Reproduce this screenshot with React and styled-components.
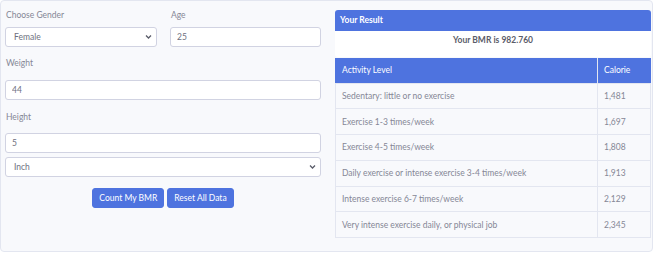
import React from "react";
import styled, { createGlobalStyle } from "styled-components";

const Global = createGlobalStyle`
  html, body { margin: 0; padding: 0; background: #ffffff; }
  body { font-family: Lato, "Noto Sans", sans-serif; }
  * { box-sizing: border-box; }
`;

const Card = styled.div`
  width: 653px;
  height: 252px;
  background: #f8f9fc;
  border: 1px solid #e3e6f0;
  border-radius: 4px;
  display: grid;
  grid-template-columns: 317px 317px;
  column-gap: 13px;
  align-items: start;
  padding: 0 0 0 4px;
`;

const FormCol = styled.div`
  display: flex;
  flex-direction: column;
  padding-top: 8px;
`;

const Row = styled.div`
  display: grid;
  grid-template-columns: 152px 151px;
  column-gap: 13px;
  width: 316px;
`;

const Group = styled.div`
  display: flex;
  flex-direction: column;
  margin-bottom: ${(p) => p.$mb || 0}px;
`;

const Label = styled.label`
  display: block;
  font-size: 8.5px;
  line-height: 12px;
  height: 12px;
  color: #858796;
  padding-left: 1px;
  margin-bottom: ${(p) => p.$mb || 6}px;
`;

const Input = styled.input`
  display: block;
  width: ${(p) => p.$w || "100%"};
  height: 20px;
  border: 1px solid #d1d3e2;
  border-radius: 3px;
  background: #fff;
  font-family: inherit;
  font-size: 8.5px;
  color: #6e707e;
  padding: 0 6px;
  outline: none;
  margin: 0 0 ${(p) => p.$mb || 0}px 0;
`;

const SelectWrap = styled.div`
  position: relative;
  width: ${(p) => p.$w || "100%"};
  height: 20px;
`;

const Select = styled.select`
  display: block;
  appearance: none;
  -webkit-appearance: none;
  width: 100%;
  height: 20px;
  margin: 0;
  border: 1px solid #d1d3e2;
  border-radius: 3px;
  background: #fff;
  font-family: inherit;
  font-size: 8.5px;
  color: #6e707e;
  padding: 0 8px;
  outline: none;
`;

const Chevron = styled.svg`
  position: absolute;
  right: 5px;
  top: 7px;
  width: 7px;
  height: 6px;
  pointer-events: none;
`;

const Buttons = styled.div`
  display: flex;
  justify-content: center;
  gap: 3px;
  width: 316px;
  margin-top: 11px;
`;

const Button = styled.button`
  height: 20px;
  padding: 0 6px;
  background: #4e73df;
  border: 1px solid #4e73df;
  border-radius: 3px;
  color: #fff;
  font-family: inherit;
  font-size: 8.5px;
  cursor: pointer;
`;

const ResultCol = styled.div`
  display: flex;
  flex-direction: column;
  padding-top: 9px;
`;

const ResultBox = styled.div`
  width: 316px;
  border-radius: 3px;
  overflow: hidden;
  background: #fff;
  margin-bottom: 1px;
`;

const ResultHead = styled.div`
  background: #4e73df;
  color: #fff;
  font-size: 8.5px;
  font-weight: 700;
  height: 21px;
  line-height: 21px;
  padding-left: 5px;
`;

const ResultBody = styled.div`
  height: 26px;
  text-align: center;
  font-size: 8.5px;
  font-weight: 700;
  color: #5a5c69;
  padding-top: 4px;
  line-height: 10px;
`;

const Table = styled.table`
  width: 316px;
  border-collapse: collapse;
  font-size: 8.5px;
  color: #858796;
`;

const Th = styled.th`
  background: #4e73df;
  color: #fff;
  font-weight: 400;
  text-align: left;
  height: 25px;
  padding: 0 6px;
  border: 1px solid #e3e6f0;
  border-top: none;
  border-left-color: #4e73df;
  border-right-color: ${(p) => (p.$last ? "#4e73df" : "#e3e6f0")};
  width: ${(p) => p.$w || "auto"};
`;

const Td = styled.td`
  height: 25.8px;
  padding: 0 6px;
  border: 1px solid #e3e6f0;
`;

const rows = [
  ["Sedentary: little or no exercise", "1,481"],
  ["Exercise 1-3 times/week", "1,697"],
  ["Exercise 4-5 times/week", "1,808"],
  ["Daily exercise or intense exercise 3-4 times/week", "1,913"],
  ["Intense exercise 6-7 times/week", "2,129"],
  ["Very intense exercise daily, or physical job", "2,345"],
];

const ChevronIcon = () => (
  <Chevron viewBox="0 0 7 6">
    <path d="M1 1.5 L3.5 4 L6 1.5" fill="none" stroke="#5a5c69" strokeWidth="1.3" />
  </Chevron>
);

export default function App() {
  return (
    <>
      <Global />
      <Card>
        <FormCol>
          <Row>
            <Group $mb={10}>
              <Label>Choose Gender</Label>
              <SelectWrap>
                <Select defaultValue="Female">
                  <option>Male</option>
                  <option>Female</option>
                </Select>
                <ChevronIcon />
              </SelectWrap>
            </Group>
            <Group $mb={10}>
              <Label>Age</Label>
              <Input defaultValue="25" />
            </Group>
          </Row>
          <Group $mb={11}>
            <Label $mb={11}>Weight</Label>
            <Input $w="316px" defaultValue="44" />
          </Group>
          <Group>
            <Label $mb={10}>Height</Label>
            <Input $w="316px" $mb={4} defaultValue="5" />
            <SelectWrap $w="316px">
              <Select defaultValue="Inch">
                <option>Inch</option>
                <option>Cm</option>
              </Select>
              <ChevronIcon />
            </SelectWrap>
          </Group>
          <Buttons>
            <Button>Count My BMR</Button>
            <Button>Reset All Data</Button>
          </Buttons>
        </FormCol>
        <ResultCol>
          <ResultBox>
            <ResultHead>Your Result</ResultHead>
            <ResultBody>Your BMR is 982.760</ResultBody>
          </ResultBox>
          <Table>
            <thead>
              <tr>
                <Th>Activity Level</Th>
                <Th $w="53px" $last>Calorie</Th>
              </tr>
            </thead>
            <tbody>
              {rows.map(([a, c]) => (
                <tr key={a}>
                  <Td>{a}</Td>
                  <Td>{c}</Td>
                </tr>
              ))}
            </tbody>
          </Table>
        </ResultCol>
      </Card>
    </>
  );
}
